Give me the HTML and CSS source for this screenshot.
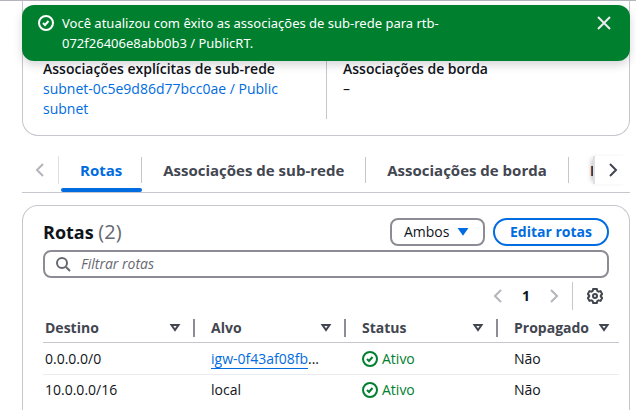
FILE: index.html
```html
<!DOCTYPE html>
<html lang="pt">
<head>
<meta charset="utf-8">
<title>Tabela de rotas</title>
<link rel="stylesheet" href="styles.css">
</head>
<body>
<svg class="defs" aria-hidden="true">
  <symbol id="check" viewBox="0 0 16 16"><circle cx="8" cy="8" r="7"/><path d="M5 8l2 2 3.500-4"/></symbol>
  <symbol id="left" viewBox="0 0 16 16"><path d="M11 2L5 8l6 6"/></symbol>
  <symbol id="right" viewBox="0 0 16 16"><path d="M5 2l6 6-6 6"/></symbol>
  <symbol id="sort" viewBox="0 0 16 16"><path d="M4.500 5h7L8 10z"/></symbol>
</svg>
<div class="flash" role="status">
  <svg class="icon"><use href="#check"/></svg>
  <p class="flash-text">Você atualizou com êxito as associações de sub-rede para rtb-072f26406e8abb0b3 / PublicRT.</p>
  <button class="icon-button close" aria-label="Fechar"><svg class="icon" viewBox="0 0 16 16"><path d="M2 2l12 12M14 2L2 14"/></svg></button>
</div>
<main class="page">
  <section class="card details">
    <div class="detail">
      <h3 class="label">Associações explícitas de sub-rede</h3>
      <a class="link" href="#">subnet-0c5e9d86d77bcc0ae / Public subnet</a>
    </div>
    <div class="detail">
      <h3 class="label">Associações de borda</h3>
      <div>–</div>
    </div>
  </section>
  <nav class="tabs">
    <button class="icon-button scroll prev" aria-label="Anterior" disabled><svg class="icon"><use href="#left"/></svg></button>
    <div class="tab-list" role="tablist">
      <button class="tab active" role="tab" aria-selected="true"><span>Rotas</span></button>
      <button class="tab" role="tab"><span>Associações de sub-rede</span></button>
      <button class="tab" role="tab"><span>Associações de borda</span></button>
      <button class="tab" role="tab"><span>Propagação de rotas</span></button>
    </div>
    <button class="icon-button scroll next" aria-label="Próximo"><svg class="icon"><use href="#right"/></svg></button>
  </nav>
  <section class="card routes">
    <header class="head">
      <h2 class="title">Rotas <span class="count">(2)</span></h2>
      <button class="select">Ambos <svg class="icon caret"><use href="#sort"/></svg></button>
      <button class="edit">Editar rotas</button>
    </header>
    <label class="search">
      <svg class="icon" viewBox="0 0 16 16"><circle cx="7" cy="7" r="5"/><path d="M11 11l4 4"/></svg>
      <input type="search" placeholder="Filtrar rotas" aria-label="Filtrar rotas">
    </label>
    <div class="pager">
      <button class="icon-button muted" aria-label="Página anterior"><svg class="icon"><use href="#left"/></svg></button>
      <button class="icon-button current">1</button>
      <button class="icon-button muted" aria-label="Próxima página"><svg class="icon"><use href="#right"/></svg></button>
      <button class="icon-button gear" aria-label="Preferências"><svg class="icon" viewBox="0 0 16 16"><path d="M6.2 1h3.6l.5 1.900 1.200.7 2-.5 1.700 3L13.800 7.400v1.200l1.400 1.300-1.700 3-2-.5-1.200.7-.5 1.900H6.200l-.5-1.900-1.200-.7-2 .5-1.700-3 1.400-1.300V7.400L.8 6.100l1.700-3 2 .5 1.200-.7z"/><circle cx="8" cy="8" r="2"/></svg></button>
    </div>
    <div class="table-wrap">
    <table class="table">
      <colgroup><col class="c1"><col class="c2"><col class="c1"><col></colgroup>
      <thead><tr>
        <th><div class="th">Destino <svg class="icon"><use href="#sort"/></svg></div></th>
        <th><div class="th">Alvo <svg class="icon"><use href="#sort"/></svg></div></th>
        <th><div class="th">Status <svg class="icon"><use href="#sort"/></svg></div></th>
        <th><div class="th">Propagado <svg class="icon"><use href="#sort"/></svg></div></th>
      </tr></thead>
      <tbody>
        <tr><td>0.0.0.0/0</td><td><a class="link target" href="#">igw-0f43af08fb</a>...</td><td><span class="status"><svg class="icon"><use href="#check"/></svg>Ativo</span></td><td>Não</td></tr>
        <tr><td>10.0.0.0/16</td><td>local</td><td><span class="status"><svg class="icon"><use href="#check"/></svg>Ativo</span></td><td>Não</td></tr>
      </tbody>
    </table>
    </div>
  </section>
</main>
</body>
</html>
```
FILE: styles.css
```css
* { box-sizing: border-box; }
body {
  margin: 0;
  height: 100vh;
  overflow: hidden;
  border-top: 1px solid #b4b4bb;
  background: #fff;
  color: #0f141a;
  font: 14px/20px "Open Sans", "Noto Sans", sans-serif;
}
h2, h3, p { margin: 0; }
button, input { font: inherit; color: inherit; }
button { border: 0; padding: 0; background: none; }
.defs { position: absolute; width: 0; height: 0; }
.icon {
  flex: none;
  width: 16px;
  height: 16px;
  fill: none;
  stroke: currentColor;
  stroke-width: 2;
}
.icon-button { display: flex; align-items: center; justify-content: center; }
.link { color: #006ce0; text-decoration: none; }

.flash {
  position: absolute;
  z-index: 2;
  top: 5px;
  left: 22px;
  right: 6px;
  display: flex;
  gap: 8px;
  padding: 8px 18px 8px 16px;
  border-radius: 12px;
  background: #00802f;
  color: #fff;
  font-family: "Noto Sans", "Open Sans", sans-serif;
  font-size: 13px;
  box-shadow: 0 4px 10px rgba(0, 7, 22, 0.16);
}
.flash > .icon { margin-top: 2px; }
.flash-text { flex: 1; max-width: 420px; }
.close { height: 20px; margin-left: auto; color: #ebebf0; }

.page {
  display: flex;
  flex-direction: column;
  height: 100%;
  margin: 0 6px 0 22px;
}
.card { border: 1px solid #c6c6cd; border-radius: 16px; }
.details {
  display: grid;
  grid-template-columns: 1fr 1fr;
  padding: 58px 20px 16px;
  border-top: 0;
  border-radius: 0 0 16px 16px;
}
.detail { padding-right: 24px; }
.detail + .detail { padding-left: 16px; border-left: 1px solid #c6c6cd; }
.label { font-size: 14px; font-weight: 600; }

.tabs {
  display: flex;
  flex: none;
  margin-top: 16px;
  height: 41px;
  border-bottom: 1px solid #c6c6cd;
}
.scroll { flex: none; width: 37px; height: 28px; margin-top: 4px; color: #424650; }
.prev { border-right: 1px solid #dedee3; color: #b4b4bb; }
.next { border-left: 2px solid #dedee3; box-shadow: -4px 0 5px -3px rgba(0, 7, 22, 0.3); }
.tab-list { display: flex; flex: 1; min-width: 0; overflow: hidden; padding-left: 2px; }
.tab {
  flex: none;
  padding: 5px 0 6px;
  border-bottom: 4px solid transparent;
  color: #424650;
  font-size: 15px;
  font-weight: 700;
}
.tab span { display: block; padding: 3px 21px; border-right: 1px solid #c6c6cd; }
.active { position: relative; color: #006ce0; }
.tab.active span { padding: 3px 19px; }
.active::after {
  content: "";
  position: absolute;
  left: 0;
  right: 0;
  bottom: -4px;
  height: 4px;
  border-radius: 2px;
  background: #006ce0;
}

.routes {
  flex: 1;
  margin-top: 12px;
  padding: 12px 20px 0;
  border-bottom: 0;
  border-radius: 16px 16px 0 0;
}
.head { display: flex; align-items: center; gap: 8px; }
.title { flex: 1; font-size: 18px; line-height: 24px; font-weight: 700; }
.count { color: #656871; font-size: 20px; font-weight: 400; }
.select, .edit {
  display: flex;
  align-items: center;
  justify-content: space-between;
  height: 28px;
  border: 2px solid #8c8c94;
  border-radius: 8px;
  padding: 0 12px;
}
.select { width: 95px; }
.caret { color: #006ce0; fill: currentColor; }
.edit { padding: 0 15px; border-color: #006ce0; border-radius: 20px; color: #006ce0; font-weight: 700; }
.search {
  display: flex;
  align-items: center;
  gap: 10px;
  height: 28px;
  margin-top: 4px;
  padding: 0 10px;
  border: 2px solid #8c8c94;
  border-radius: 8px;
  color: #656871;
}
.search input { flex: 1; min-width: 0; border: 0; padding: 0; outline: 0; background: none; }
.search input::placeholder { color: #656871; font-style: italic; opacity: 1; }
.pager {
  display: flex;
  align-items: center;
  justify-content: flex-end;
  height: 28px;
  margin-top: 4px;
}
.pager .icon-button { width: 28px; height: 28px; }
.muted { color: #b4b4bb; }
.current { font-weight: 700; }
.pager .gear { width: 37px; padding-left: 8px; margin-left: 4px; border-left: 1px solid #c6c6cd; color: #424650; }

.table-wrap { margin: 4px -10px 0 0; }
.table { width: 100%; table-layout: fixed; border-collapse: separate; border-spacing: 0; }
.c1 { width: 152px; }
.c2 { width: 151px; }
.table th, .table td { padding: 0 0 0 16px; text-align: left; white-space: nowrap; }
.table th:first-child, .table td:first-child { padding-left: 2px; }
.table th { height: 29px; border-bottom: 1px solid #c6c6cd; color: #424650; }
.table td { height: 32px; border-bottom: 1px solid #ebebf0; }
.table tr:last-child td { height: 30px; border-bottom: 0; }
.th {
  display: flex;
  align-items: center;
  justify-content: space-between;
  height: 18px;
  padding-right: 10px;
  border-right: 2px solid #8c8c94;
}
th:last-child .th { padding-right: 7px; border: 0; }
.target { border-bottom: 1px solid #006ce0; }
.status { display: flex; align-items: center; gap: 4px; color: #00802f; }
```
